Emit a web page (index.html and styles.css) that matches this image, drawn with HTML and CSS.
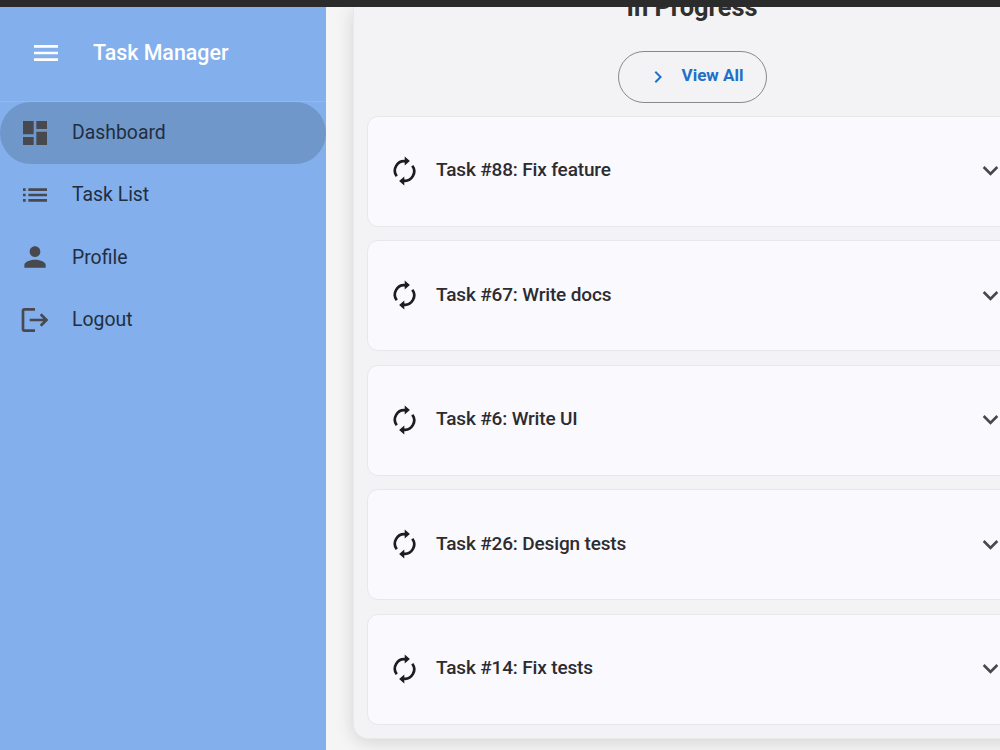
FILE: index.html
```html
<!DOCTYPE html>
<html lang="en">
<head>
<meta charset="utf-8">
<title>Task Manager</title>
<link rel="stylesheet" href="styles.css">
</head>
<body>
<svg class="sprite" aria-hidden="true">
  <symbol id="renew" viewBox="-16.500 -16 32 32"><path d="M-7.800 5.200A9.400 9.400 0 0 1 1-9.700M7.800-5.200A9.400 9.400 0 0 1-1 9.700" fill="none" stroke="currentColor" stroke-width="2.700"/><path d="M.2-14.400 5.400-9.900.2-5.400zM-.2 14.400-5.400 9.900-.2 5.400z"/></symbol>
  <symbol id="expand" viewBox="0 0 24 24"><path d="M16.59 8.59 12 13.17 7.41 8.59 6 10l6 6 6-6z"/></symbol>
</svg>
<div class="topbar"></div>
<div class="shell">
  <aside class="sidebar">
    <header class="brand">
      <svg class="icon" viewBox="0 0 24 24"><path d="M3 18h18v-2H3v2zm0-5h18v-2H3v2zm0-7v2h18V6H3z"/></svg>
      <h1 class="brand-name">Task Manager</h1>
    </header>
    <nav class="nav">
      <a class="nav-item active"><svg class="icon" viewBox="0 0 24 24"><path d="M3 13h8V3H3v10zm0 8h8v-6H3v6zm10 0h8V11h-8v10zm0-18v6h8V3h-8z"/></svg><span>Dashboard</span></a>
      <a class="nav-item"><svg class="icon" viewBox="0 0 24 24"><path d="M3 13h2v-2H3v2zm0 4h2v-2H3v2zm0-8h2V7H3v2zm4 4h14v-2H7v2zm0 4h14v-2H7v2zM7 7v2h14V7H7z"/></svg><span>Task List</span></a>
      <a class="nav-item"><svg class="icon" viewBox="0 0 24 24"><path d="M12 12c2.21 0 4-1.79 4-4s-1.790-4-4-4-4 1.790-4 4 1.790 4 4 4zm0 2c-2.670 0-8 1.340-8 4v2h16v-2c0-2.660-5.330-4-8-4z"/></svg><span>Profile</span></a>
      <a class="nav-item"><svg class="icon" viewBox="0 0 24 24"><path d="M17 7l-1.410 1.410L18.170 11H8v2h10.170l-2.580 2.580L17 17l5-5zM4 5h8V3H4c-1.100 0-2 .9-2 2v14c0 1.100.9 2 2 2h8v-2H4V5z"/></svg><span>Logout</span></a>
    </nav>
  </aside>
  <main class="content">
    <section class="panel">
      <h2 class="panel-title">In Progress</h2>
      <button class="view-all"><svg class="chevron" viewBox="0 0 24 24"><path d="M10 6 8.590 7.410 13.170 12l-4.580 4.590L10 18l6-6z"/></svg><span>View All</span></button>
      <div class="tasks">
        <article class="task"><svg class="icon"><use href="#renew"/></svg><span class="task-name">Task #88: Fix feature</span><svg class="expand"><use href="#expand"/></svg></article>
        <article class="task"><svg class="icon"><use href="#renew"/></svg><span class="task-name">Task #67: Write docs</span><svg class="expand"><use href="#expand"/></svg></article>
        <article class="task"><svg class="icon"><use href="#renew"/></svg><span class="task-name">Task #6: Write UI</span><svg class="expand"><use href="#expand"/></svg></article>
        <article class="task"><svg class="icon"><use href="#renew"/></svg><span class="task-name">Task #26: Design tests</span><svg class="expand"><use href="#expand"/></svg></article>
        <article class="task"><svg class="icon"><use href="#renew"/></svg><span class="task-name">Task #14: Fix tests</span><svg class="expand"><use href="#expand"/></svg></article>
      </div>
    </section>
  </main>
</div>
</body>
</html>
```
FILE: styles.css
```css
* { box-sizing: border-box; }

body {
  margin: 0;
  height: 750px;
  overflow: hidden;
  display: flex;
  flex-direction: column;
  font-family: Roboto, "Liberation Sans", sans-serif;
  color: #1d1d20;
  background: #f5f5f5;
}

.sprite {
  position: absolute;
  width: 0;
  height: 0;
}

.topbar {
  flex: none;
  height: 6.500px;
  background: #2b2b2b;
}

.shell {
  flex: 1;
  min-height: 0;
  display: flex;
  overflow: hidden;
}

.icon {
  flex: none;
  width: 32px;
  height: 32px;
  fill: currentColor;
}

.sidebar {
  flex: none;
  width: 326px;
  background: #83afec;
}

.brand {
  height: 95px;
  padding: 0 30px 2px;
  display: flex;
  align-items: center;
  gap: 31px;
  color: #fff;
  border-bottom: 1px solid #92b8ed;
}

.brand-name {
  margin: 0;
  font-size: 21.400px;
  font-weight: 500;
  line-height: 28px;
}

.nav-item {
  height: 62.300px;
  padding-left: 19px;
  display: flex;
  align-items: center;
  gap: 21px;
  border-radius: 32px;
  font-size: 19.400px;
  color: #222e40;
}

.nav-item .icon { color: #47494e; }

.active { background: #7097ca; }

.content {
  flex: 1;
  min-width: 0;
  padding-left: 27px;
}

.panel {
  width: 678px;
  height: 732px;
  padding: 0 13px;
  display: flex;
  flex-direction: column;
  align-items: center;
  background: #f3f3f5;
  border: 1px solid #e9e9eb;
  border-top: 0;
  border-radius: 0 0 15px 15px;
  box-shadow: 0 3px 18px rgba(0, 0, 0, 0.14);
}

.panel-title {
  margin: -15px 0 0;
  font-size: 25.400px;
  line-height: 30px;
  font-weight: 700;
  color: #303030;
}

.view-all {
  flex: none;
  width: 149px;
  height: 52px;
  margin: 29px 0 13px;
  padding: 0 22px 0 27px;
  display: flex;
  align-items: center;
  justify-content: space-between;
  border: 1px solid #88898b;
  border-radius: 26px;
  background: transparent;
  font: 700 17px Roboto, sans-serif;
  color: #2070c8;
}

.view-all span { padding-bottom: 3px; }

.chevron {
  width: 24px;
  height: 24px;
  fill: currentColor;
}

.tasks {
  width: 100%;
  display: flex;
  flex-direction: column;
  gap: 13.600px;
}

.task {
  height: 111px;
  padding: 0 10px 1px 20px;
  display: flex;
  align-items: center;
  gap: 16px;
  background: #faf9fe;
  border: 1px solid #e8e8eb;
  border-radius: 11px;
}

.task-name {
  flex: 1;
  padding-bottom: 2px;
  font-size: 19px;
  font-weight: 500;
  letter-spacing: -0.150px;
  color: #2c2c30;
}

.expand {
  width: 31px;
  height: 31px;
  fill: #47484c;
}
```
